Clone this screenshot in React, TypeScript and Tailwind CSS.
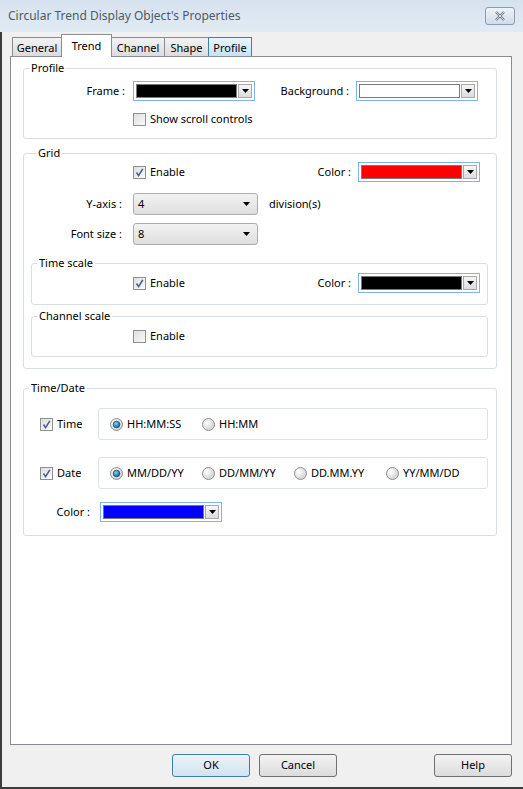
import React from "react";

const Check = ({ checked }: { checked?: boolean }) => (
  <span className="w-[13px] h-[13px] shrink-0 border border-[#8e8f8f] bg-gradient-to-br from-[#dedede] to-[#fbfbfb] flex items-center justify-center">
    {checked && (
      <svg width="11" height="11" viewBox="0 0 11 11">
        <path d="M2.5 5.5 L4.6 8.6 L8.8 1.8" fill="none" stroke="#4a5f8e" strokeWidth="1.6" />
      </svg>
    )}
  </span>
);

const Radio = ({ checked }: { checked?: boolean }) => (
  <svg width="13" height="13" viewBox="0 0 13 13" className="shrink-0">
    <defs>
      <radialGradient id="rg" cx="0.35" cy="0.35" r="0.8">
        <stop offset="0" stopColor="#ffffff" />
        <stop offset="1" stopColor="#c9c9c9" />
      </radialGradient>
      <radialGradient id="rb" cx="0.4" cy="0.35" r="0.7">
        <stop offset="0" stopColor="#7ed0f5" />
        <stop offset="1" stopColor="#0f5d93" />
      </radialGradient>
    </defs>
    <circle cx="6.5" cy="6.5" r="6" fill="url(#rg)" stroke="#8e8f8f" />
    {checked && <circle cx="6.5" cy="6.5" r="3.3" fill="url(#rb)" stroke="#174a6e" strokeWidth="0.8" />}
  </svg>
);

const Arrow = () => (
  <svg width="7" height="4" viewBox="0 0 7 4">
    <path d="M0 0 H7 L3.5 4 Z" fill="#000" />
  </svg>
);

const ColorPick = ({ fill }: { fill: string }) => (
  <div className="w-[122px] h-[20px] shrink-0 border border-[#7eb4ea] bg-white flex items-stretch p-[2px]">
    <div className={`w-[101px] border border-[#7a7a7a] ${fill}`} />
    <div className="ml-auto w-[14px] border border-[#a9a9a9] bg-gradient-to-b from-[#f6f6f6] to-[#dcdcdc] flex items-center justify-center">
      <Arrow />
    </div>
  </div>
);

const Combo = ({ value }: { value: string }) => (
  <div className="w-[125px] h-[22px] shrink-0 rounded-[3px] border border-[#acacac] bg-gradient-to-b from-[#f3f3f3] to-[#dedede] flex items-center pl-[4px] pr-[7px]">
    <span>{value}</span>
    <span className="ml-auto">
      <Arrow />
    </span>
  </div>
);

const Group = ({ title, className, children }: { title: string; className?: string; children: React.ReactNode }) => (
  <fieldset className={`border border-[#d5dfe5] rounded-[3px] ${className ?? ""}`}>
    <legend className="ml-[5px] px-[2px] leading-[14px]">{title}</legend>
    {children}
  </fieldset>
);

const tabs = ["General", "Trend", "Channel", "Shape", "Profile"];

export default function App() {
  return (
    <div className="w-[523px] h-[789px] bg-[#f0f0f0] flex flex-col overflow-hidden font-['Noto_Sans','Liberation_Sans',sans-serif] text-[11px] text-black">
      <div className="h-[32px] shrink-0 bg-gradient-to-b from-[#d6e2ef] to-[#e2ebf4] flex items-center pl-[8px] pr-[8px]">
        <span className="text-[12px] text-[#4d5b69]">Circular Trend Display Object's Properties</span>
        <div className="ml-auto w-[30px] h-[18px] rounded-[3px] border border-[#8b9cb1] bg-gradient-to-b from-[#eef3f8] to-[#d2dce8] flex items-center justify-center">
          <svg width="12" height="10" viewBox="0 0 12 10">
            <path d="M2 1 L10 9 M10 1 L2 9" stroke="#5d6b7d" strokeWidth="2.2" />
            <path d="M2 1 L10 9 M10 1 L2 9" stroke="#ffffff" strokeWidth="0.8" />
          </svg>
        </div>
      </div>

      <div className="flex-1 flex flex-col border-l-2 border-b-2 border-[#3d3d3d] pl-[8px] pr-[11px]">
        <div className="h-[23px] mt-[2px] flex items-end pl-[2px] relative z-10">
          {tabs.map((t) => {
            const sel = t === "Trend";
            const hot = t === "Profile";
            const w =
              t === "General" ? "w-[50px]" : t === "Trend" ? "w-[51px]" : t === "Channel" ? "w-[54px]" : t === "Shape" ? "w-[45px]" : "w-[44px]";
            return (
              <div
                key={t}
                className={`${w} -ml-px first:ml-0 flex justify-center border border-b-0 ${
                  sel
                    ? "h-[23px] bg-white border-[#898c95] pt-[3px]"
                    : hot
                    ? "h-[19px] mb-px bg-gradient-to-b from-[#e9f5fd] to-[#c4e3f8] border-[#3c7fb1] pt-[2px]"
                    : "h-[19px] mb-px bg-gradient-to-b from-[#f3f3f3] to-[#dcdcdc] border-[#898c95] pt-[2px]"
                }`}
              >
                {t}
              </div>
            );
          })}
        </div>

        <div className="flex-1 -mt-px border border-[#898c95] bg-white pl-[12px] pr-[14px] pt-[4px]">
          <Group title="Profile" className="pb-[12px]">
            <div className="mt-[6px] h-[20px] flex items-center">
              <span className="w-[101px] text-right">Frame :</span>
              <span className="ml-[8px]">
                <ColorPick fill="bg-[#000000]" />
              </span>
              <span className="w-[94px] text-right">Background :</span>
              <span className="ml-[7px]">
                <ColorPick fill="bg-[#ffffff]" />
              </span>
            </div>
            <div className="mt-[12px] h-[13px] flex items-center pl-[109px] gap-[4px]">
              <Check />
              <span>Show scroll controls</span>
            </div>
          </Group>

          <Group title="Grid" className="mt-[7px] pl-[7px] pr-[8px] pb-[11px]">
            <div className="mt-[2px] h-[20px] flex items-center pl-[102px] pr-[8px]">
              <Check checked />
              <span className="ml-[4px]">Enable</span>
              <span className="ml-auto mr-[7px]">Color :</span>
              <ColorPick fill="bg-[#ff0000]" />
            </div>
            <div className="mt-[11px] h-[22px] flex items-center">
              <span className="w-[91px] text-right">Y-axis :</span>
              <span className="ml-[11px]">
                <Combo value="4" />
              </span>
              <span className="ml-[11px]">division(s)</span>
            </div>
            <div className="mt-[8px] h-[22px] flex items-center">
              <span className="w-[91px] text-right">Font size :</span>
              <span className="ml-[11px]">
                <Combo value="8" />
              </span>
            </div>

            <Group title="Time scale" className="mt-[11px] pb-[11px]">
              <div className="mt-[3px] h-[20px] flex items-center pl-[101px] pr-[7px]">
                <Check checked />
                <span className="ml-[4px]">Enable</span>
                <span className="ml-auto mr-[7px]">Color :</span>
                <ColorPick fill="bg-[#000000]" />
              </div>
            </Group>

            <Group title="Channel scale" className="mt-[4px] pb-[10px]">
              <div className="mt-[3px] h-[20px] flex items-center pl-[101px]">
                <Check />
                <span className="ml-[4px]">Enable</span>
              </div>
            </Group>
          </Group>

          <Group title="Time/Date" className="mt-[12px] pb-[13px] pr-[8px]">
            <div className="mt-[13px] flex">
              <div className="w-[74px] pl-[16px] flex items-center gap-[4px]">
                <Check checked />
                <span>Time</span>
              </div>
              <div className="flex-1 h-[32px] rounded-[3px] border border-[#dde2e7] flex items-center pl-[11px]">
                {["HH:MM:SS", "HH:MM"].map((r, i) => (
                  <div key={r} className="w-[92px] flex items-center gap-[4px]">
                    <Radio checked={i === 0} />
                    <span>{r}</span>
                  </div>
                ))}
              </div>
            </div>
            <div className="mt-[17px] flex">
              <div className="w-[74px] pl-[16px] flex items-center gap-[4px]">
                <Check checked />
                <span>Date</span>
              </div>
              <div className="flex-1 h-[32px] rounded-[3px] border border-[#dde2e7] flex items-center pl-[11px]">
                {["MM/DD/YY", "DD/MM/YY", "DD.MM.YY", "YY/MM/DD"].map((r, i) => (
                  <div key={r} className="w-[92px] flex items-center gap-[4px]">
                    <Radio checked={i === 0} />
                    <span>{r}</span>
                  </div>
                ))}
              </div>
            </div>
            <div className="mt-[13px] h-[20px] flex items-center">
              <span className="w-[66px] text-right">Color :</span>
              <span className="ml-[10px]">
                <ColorPick fill="bg-[#0000ff]" />
              </span>
            </div>
          </Group>
        </div>

        <div className="h-[23px] mt-[9px] mb-[10px] flex">
          <button className="ml-[162px] w-[78px] h-[23px] rounded-[3px] border border-[#3c7fb1] bg-gradient-to-b from-[#eaf3f9] to-[#d3e3ee]">
            OK
          </button>
          <button className="ml-[9px] w-[78px] h-[23px] rounded-[3px] border border-[#707070] bg-gradient-to-b from-[#f3f3f3] to-[#dcdcdc]">
            Cancel
          </button>
          <button className="ml-auto w-[78px] h-[23px] rounded-[3px] border border-[#707070] bg-gradient-to-b from-[#f3f3f3] to-[#dcdcdc]">
            Help
          </button>
        </div>
      </div>
    </div>
  );
}
